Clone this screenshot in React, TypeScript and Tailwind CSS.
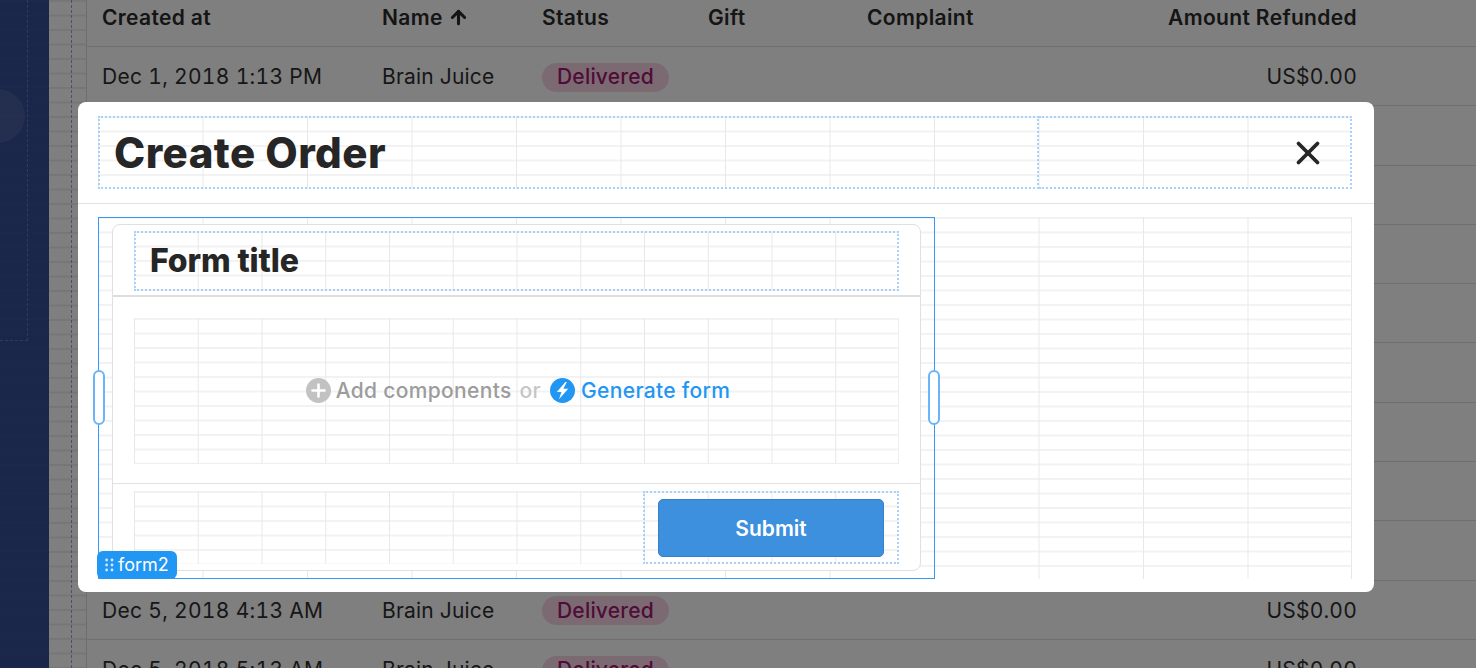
import { ArrowUp, X } from 'lucide-react'

const emptyRows = [2, 3, 4, 5, 6, 7, 8, 9]

function Row({ date }: { date?: string }) {
  return (
    <div className="grid h-[59.3px] shrink-0 grid-cols-[280px_160px_166px_159px_1fr] items-center border-b border-[#dcdcdc] pl-[15px] pr-[119px] pt-[2px] text-[21px] tracking-[0.2px] tabular-nums text-[#2e2e2e]">
      {date && (
        <>
          <span className="tracking-[0.3px]">{date}</span>
          <span>Brain Juice</span>
          <span>
            <span className="inline-flex h-[29px] items-center rounded-full bg-[#f9d4e6] px-[15px] font-medium text-[#a01870]">Delivered</span>
          </span>
          <span />
          <span className="text-right">US$0.00</span>
        </>
      )}
    </div>
  )
}

function Handle({ side }: { side: 'left' | 'right' }) {
  return (
    <div
      className={`absolute top-[152px] h-[55px] w-[12px] rounded-full border-2 border-[#69b4fa] bg-white ${
        side === 'left' ? 'left-[-6px]' : 'right-[-6px]'
      }`}
    />
  )
}

export default function App() {
  return (
    <div className="relative flex h-[668px] w-[1476px] overflow-hidden bg-white font-[Inter,sans-serif]">
      {/* Canvas behind the overlay */}
      <div className="relative w-[49px] shrink-0 bg-[#344c94] bg-[linear-gradient(to_bottom,#3a5299_1px,transparent_1px)] bg-[size:100%_14.5px]">
        <div className="absolute left-[-29px] top-[89px] h-[54px] w-[54px] rounded-full bg-white/10" />
        <div className="absolute left-[-10px] top-[-10px] h-[351px] w-[38px] border border-dashed border-[#5878c8]" />
      </div>
      <div className="relative w-[38px] shrink-0 border-r border-[#dcdcdc] bg-[linear-gradient(to_bottom,#ededed_2px,transparent_2px)] bg-[size:100%_14.5px]">
        <div className="absolute bottom-0 left-[22px] top-0 border-l border-dashed border-[#8aa6dc]" />
      </div>

      {/* Table */}
      <div className="flex min-w-0 flex-1 flex-col">
        <div className="grid h-[47px] shrink-0 grid-cols-[280px_160px_166px_159px_1fr] items-center border-b border-[#dcdcdc] pb-[11px] pl-[15px] pr-[119px] text-[21px] font-semibold tracking-[0.35px] text-[#2a2a2a]">
          <span>Created at</span>
          <span className="flex items-center gap-[5px]">
            Name <ArrowUp size={21} strokeWidth={3.5} />
          </span>
          <span>Status</span>
          <span>Gift</span>
          <span className="flex justify-between">
            Complaint
            <span>Amount Refunded</span>
          </span>
        </div>
        <Row date="Dec 1, 2018 1:13 PM" />
        {emptyRows.map(n => (
          <Row key={n} />
        ))}
        <Row date="Dec 5, 2018 4:13 AM" />
        <Row date="Dec 5, 2018 5:13 AM" />
      </div>

      <div className="absolute inset-0 bg-black/50" />

      {/* Modal */}
      <div className="absolute left-[78px] top-[102px] flex h-[490px] w-[1296px] flex-col rounded-[8px] bg-white text-[#262626]">
        <div className="border-b border-[#e2e2e2] py-[14px] pl-[20px] pr-[22px]">
          <div className="flex h-[73px] bg-[linear-gradient(to_right,#e8e8e8_1px,transparent_1px),linear-gradient(to_bottom,#f2f2f2_2px,transparent_2px)] bg-[size:104.5px_14.5px]">
            <div className="flex w-[941px] items-center border-2 border-dotted border-[#a6d3fb] pl-[14px]">
              <h1 className="text-[42px] font-extrabold leading-none tracking-[0.45px]">Create Order</h1>
            </div>
            <div className="flex flex-1 items-center justify-end border-2 border-l-0 border-dotted border-[#a6d3fb] pr-[23px]">
              <X size={38} strokeWidth={2.4} />
            </div>
          </div>
        </div>

        <div className="pb-[14px] pl-[20px] pr-[22px] pt-[13px]">
          <div className="h-[362px] border-r border-[#e8e8e8] bg-[linear-gradient(to_right,#e8e8e8_1px,transparent_1px),linear-gradient(to_bottom,#f2f2f2_2px,transparent_2px)] bg-[size:104.5px_14.5px]">
            <div className="relative h-[362px] w-[837px] border border-[#2f9af8] px-[13px] pb-[7px] pt-[6px]">
              <div className="flex h-full flex-col rounded-[8px] border border-[#e0e0e0] bg-white">
                <div className="h-[72px] shrink-0 border-b-2 border-[#dedede] px-[21px] pt-[6px]">
                  <div className="flex h-[60px] items-center border-2 border-dotted border-[#a6d3fb] bg-[linear-gradient(to_right,#e8e8e8_1px,transparent_1px),linear-gradient(to_bottom,#f2f2f2_2px,transparent_2px)] bg-[size:63.75px_14.5px] bg-origin-border pl-[14px]">
                    <h2 className="text-[32px] font-extrabold leading-none tracking-[-0.1px]">Form title</h2>
                  </div>
                </div>

                <div className="h-[187px] shrink-0 border-b border-[#e2e2e2] px-[21px] pb-[19px] pt-[21px]">
                  <div className="flex h-full items-center justify-center border-b border-r border-[#eeeeee] bg-[linear-gradient(to_right,#e8e8e8_1px,transparent_1px),linear-gradient(to_bottom,#f2f2f2_2px,transparent_2px)] bg-[size:63.75px_14.5px] pl-[4px] text-[21px] font-medium tracking-[0.33px]">
                    <svg width="25" height="25" viewBox="0 0 25 25" className="mr-[5px]">
                      <circle cx="12.5" cy="12.5" r="12.5" fill="#c2c2c2" />
                      <path d="M12.5 6.5v12M6.5 12.5h12" stroke="#fff" strokeWidth="2.6" strokeLinecap="round" />
                    </svg>
                    <span className="text-[#9c9c9c]">Add components</span>
                    <span className="ml-[8px] mr-[9px] text-[#c6c6c6]">or</span>
                    <svg width="25" height="25" viewBox="0 0 25 25" className="mr-[6px]">
                      <circle cx="12.5" cy="12.5" r="12.5" fill="#2196f3" />
                      <path d="M15.4 4 6.8 14h4.6l-2.4 7.2 9.2-10.4h-4.8L16.8 4z" fill="#fff" />
                    </svg>
                    <span className="text-[#2196f3]">Generate form</span>
                  </div>
                </div>

                <div className="mx-[21px] mt-[7px] flex h-[73px] justify-end bg-[linear-gradient(to_right,#e8e8e8_1px,transparent_1px),linear-gradient(to_bottom,#f2f2f2_2px,transparent_2px)] bg-[size:63.75px_14.5px]">
                  <div className="flex w-[256px] items-center justify-center border-2 border-dotted border-[#a6d3fb]">
                    <button type="button" className="h-[58px] w-[226px] rounded-[5px] border border-[#3a80c6] bg-[#3d90dd] pt-[2px] text-[21px] font-semibold text-white">
                      Submit
                    </button>
                  </div>
                </div>
              </div>

              <Handle side="left" />
              <Handle side="right" />

              <div className="absolute bottom-[-1px] left-[-2px] flex h-[28px] w-[80px] items-center gap-[4px] rounded-[6px] bg-[#2196f3] pb-[2px] pl-[8px] text-[18px] text-white">
                <svg width="9" height="14" viewBox="0 0 9 14" fill="#d5eafd" className="mt-[2px]">
                  <circle cx="1.6" cy="2" r="1.4" />
                  <circle cx="7" cy="2" r="1.4" />
                  <circle cx="1.6" cy="7" r="1.4" />
                  <circle cx="7" cy="7" r="1.4" />
                  <circle cx="1.6" cy="12" r="1.4" />
                  <circle cx="7" cy="12" r="1.4" />
                </svg>
                form2
              </div>
            </div>
          </div>
        </div>
      </div>
    </div>
  )
}
